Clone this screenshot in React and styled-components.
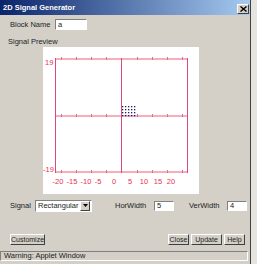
import React from 'react';
import styled, { createGlobalStyle } from 'styled-components';

const GlobalStyle = createGlobalStyle`
  html, body {
    margin: 0;
    padding: 0;
    background: #e6e4de;
  }
  body {
    font-family: 'Liberation Sans', Arial, sans-serif;
    font-size: 7.5px;
    color: #222;
  }
`;

const raised = `
  border-top: 1px solid #fff;
  border-left: 1px solid #fff;
  border-right: 1px solid #404040;
  border-bottom: 1px solid #404040;
`;

const sunken = `
  border-top: 1px solid #808080;
  border-left: 1px solid #808080;
  border-right: 1px solid #fff;
  border-bottom: 1px solid #fff;
`;

const xTicks = [18, 33, 48, 63, 94, 109, 124, 139];
const xLabels = [
  [15, '-20'], [29, '-15'], [43, '-10'], [55, '-5'], [71, '0'],
  [87, '5'], [101, '10'], [115, '15'], [128, '20'],
];

const Plot = () => {
  const dots = [];
  [60, 63, 66, 69].forEach(y =>
    [78, 81, 84, 87, 90].forEach(x => dots.push([x, y]))
  );

  return (
    <svg width="156" height="147" viewBox="0 0 156 147">
      {/* horizontal axes (pink, thicker) */}
      <line x1="12" y1="12" x2="145" y2="12" stroke="#f4aebe" strokeWidth="2" />
      <line x1="12" y1="125" x2="145" y2="125" stroke="#f4aebe" strokeWidth="2" />
      <line x1="12" y1="69" x2="145" y2="69" stroke="#f4aebe" strokeWidth="2" />
      {/* vertical axes */}
      <line x1="12.5" y1="11" x2="12.5" y2="126" stroke="#dc4a7c" strokeWidth="1" />
      <line x1="144.5" y1="11" x2="144.5" y2="126" stroke="#dc4a7c" strokeWidth="1" />
      <line x1="78.5" y1="11" x2="78.5" y2="126" stroke="#dc4a7c" strokeWidth="1" />
      {xTicks.map(x => (
        <g key={x} stroke="#d8708e" strokeWidth="1">
          <line x1={x + 0.5} y1="10" x2={x + 0.5} y2="13" />
          <line x1={x + 0.5} y1="67" x2={x + 0.5} y2="70" />
          <line x1={x + 0.5} y1="123" x2={x + 0.5} y2="126" />
        </g>
      ))}
      {dots.map(([x, y]) => (
        <rect key={`${x}-${y}`} x={x + 1} y={y - 1} width="1.3" height="1.3" fill="#1c1c6e" />
      ))}
      <g fill="#e83252" fontFamily="'Liberation Sans', Arial, sans-serif" fontSize="7.5">
        <text x="2" y="18">19</text>
        <text x="0" y="125">-19</text>
        {xLabels.map(([x, t]) => (
          <text key={t} x={x} y="137" textAnchor="middle">{t}</text>
        ))}
      </g>
    </svg>
  );
};

export default function App() {
  return (
    <>
      <GlobalStyle />
      <Window>
        <TitleBar>
          <span>2D Signal Generator</span>
          <CloseBox>
            <svg width="7" height="6" viewBox="0 0 7 6">
              <path d="M0.5 0.5 L6.5 5.5 M6.5 0.5 L0.5 5.5" stroke="#000" strokeWidth="1.4" />
            </svg>
          </CloseBox>
        </TitleBar>

        <FieldRow>
          <Label width={45}>Block Name</Label>
          <TextInput width={32} height={11}>a</TextInput>
        </FieldRow>

        <SectionLabel>Signal Preview</SectionLabel>

        <Preview>
          <Plot />
        </Preview>

        <ControlRow>
          <Label width={25}>Signal</Label>
          <Select>
            <span>Rectangular</span>
            <SelectArrow>
              <svg width="5" height="3" viewBox="0 0 5 3">
                <path d="M0 0 H5 L2.5 3 Z" fill="#000" />
              </svg>
            </SelectArrow>
          </Select>
          <Label width={39} gap={23}>HorWidth</Label>
          <TextInput width={20} height={10}>5</TextInput>
          <Label width={38} gap={15}>VerWidth</Label>
          <TextInput width={20} height={10}>4</TextInput>
        </ControlRow>

        <ButtonRow>
          <Button width={35}>Customize</Button>
          <Spacer />
          <Button width={21}>Close</Button>
          <Button width={31}>Update</Button>
          <Button width={21}>Help</Button>
        </ButtonRow>

        <StatusBar>Warning: Applet Window</StatusBar>
      </Window>
    </>
  );
}

const Window = styled.div`
  display: flex;
  flex-direction: column;
  width: 251px;
  height: 264px;
  background: #d4d0c8;
  border-right: 1px solid #404040;
  box-sizing: border-box;
`;

const TitleBar = styled.div`
  display: flex;
  align-items: center;
  justify-content: space-between;
  height: 15px;
  padding: 0 1px 0 3px;
  background: linear-gradient(to right, #0a246a, #a6caf0);
  color: #fff;
  font-weight: bold;
  font-size: 7.5px;
`;

const CloseBox = styled.div`
  display: flex;
  align-items: center;
  justify-content: center;
  width: 10px;
  height: 8px;
  margin-top: 3px;
  background: #d4d0c8;
  ${raised}
`;

const FieldRow = styled.div`
  display: flex;
  align-items: center;
  height: 11px;
  margin-top: 4px;
  padding-left: 10px;
`;

const Label = styled.span`
  width: ${p => p.width}px;
  margin-left: ${p => p.gap || 0}px;
  flex-shrink: 0;
  white-space: nowrap;
`;

const TextInput = styled.div`
  width: ${p => p.width}px;
  height: ${p => p.height}px;
  box-sizing: border-box;
  padding-left: 2px;
  line-height: ${p => p.height - 2}px;
  background: #fff;
  ${sunken}
`;

const SectionLabel = styled.div`
  margin-top: 8px;
  padding-left: 8px;
  line-height: 8px;
`;

const Preview = styled.div`
  width: 156px;
  height: 147px;
  margin: 1px 0 0 43px;
  background: #fff;
  svg {
    display: block;
  }
`;

const ControlRow = styled.div`
  display: flex;
  align-items: center;
  height: 13px;
  margin-top: 5px;
  padding-left: 10px;
`;

const Select = styled.div`
  display: flex;
  align-items: center;
  justify-content: space-between;
  width: 57px;
  height: 12px;
  box-sizing: border-box;
  padding: 0 1px 0 2px;
  background: #fff;
  ${sunken}
`;

const SelectArrow = styled.div`
  display: flex;
  align-items: center;
  justify-content: center;
  width: 8px;
  height: 8px;
  background: #d4d0c8;
  ${raised}
`;

const ButtonRow = styled.div`
  display: flex;
  align-items: center;
  gap: 2px;
  margin-top: auto;
  padding: 0 5px 0 10px;
`;

const Spacer = styled.div`
  flex: 1;
`;

const Button = styled.div`
  width: ${p => p.width}px;
  height: 11px;
  box-sizing: border-box;
  text-align: center;
  line-height: 9px;
  font-size: 7px;
  background: #d4d0c8;
  ${raised}
`;

const StatusBar = styled.div`
  height: 10px;
  margin: 6px 2px 3px 0;
  box-sizing: border-box;
  padding-left: 3px;
  line-height: 8px;
  ${sunken}
`;
